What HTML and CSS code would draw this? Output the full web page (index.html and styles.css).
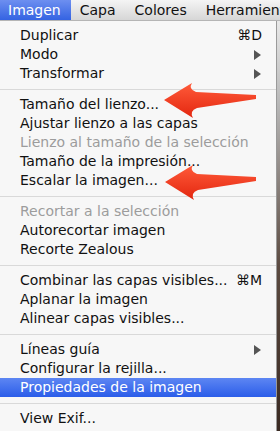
FILE: index.html
```html
<!DOCTYPE html>
<html lang="es">
<head>
    <meta charset="UTF-8">
    <meta name="viewport" content="width=device-width, initial-scale=1.0">
    <title>Menú Imagen</title>
    <link rel="stylesheet" href="styles.css">
</head>
<body>
    <div class="screen">
        <div class="menubar">
            <span class="bar-item active">Imagen</span>
            <span class="bar-item">Capa</span>
            <span class="bar-item">Colores</span>
            <span class="bar-item last">Herramienta</span>
        </div>

        <div class="content">
            <ul class="menu">
                <li class="item"><span>Duplicar</span><span class="key">&#8984;D</span></li>
                <li class="item"><span>Modo</span><span class="sub"></span></li>
                <li class="item"><span>Transformar</span><span class="sub"></span></li>
                <li class="sep"></li>
                <li class="item"><span>Tamaño del lienzo...</span></li>
                <li class="item"><span>Ajustar lienzo a las capas</span></li>
                <li class="item disabled"><span>Lienzo al tamaño de la selección</span></li>
                <li class="item"><span>Tamaño de la impresión...</span></li>
                <li class="item"><span>Escalar la imagen...</span></li>
                <li class="sep"></li>
                <li class="item disabled"><span>Recortar a la selección</span></li>
                <li class="item"><span>Autorecortar imagen</span></li>
                <li class="item"><span>Recorte Zealous</span></li>
                <li class="sep"></li>
                <li class="item"><span>Combinar las capas visibles...</span><span class="key">&#8984;M</span></li>
                <li class="item"><span>Aplanar la imagen</span></li>
                <li class="item"><span>Alinear capas visibles...</span></li>
                <li class="sep"></li>
                <li class="item"><span>Líneas guía</span><span class="sub"></span></li>
                <li class="item"><span>Configurar la rejilla...</span></li>
                <li class="item selected"><span>Propiedades de la imagen</span></li>
                <li class="sep"></li>
                <li class="item"><span>View Exif...</span></li>
            </ul>
            <div class="edge"></div>
        </div>

        <!-- flechas rojas encima del menú -->
        <svg class="arrows" width="280" height="431" viewBox="0 0 280 431">
            <defs>
                <linearGradient id="red" x1="0" y1="0" x2="0" y2="1">
                    <stop offset="0" stop-color="#ff5b3a"/>
                    <stop offset="1" stop-color="#e3260f"/>
                </linearGradient>
            </defs>
            <path d="M164,100 L192,83 Q188,89 196,92 L256,95 L256,99 L197,108 Q189,111 193,118 Z" fill="url(#red)"/>
            <path d="M165,182 L193,165 Q189,171 197,174 L256,177 L256,181 L198,190 Q190,193 194,200 Z" fill="url(#red)"/>
        </svg>
    </div>
</body>
</html>
```
FILE: styles.css
```css
body {
    margin: 0;
    font-family: 'DejaVu Sans', 'Liberation Sans', sans-serif;
    background: #fff;
}
.screen {
    position: relative;
    width: 280px;
    height: 431px;
    overflow: hidden;
}
.menubar {
    display: flex;
    height: 21px;
    background: linear-gradient(to bottom, #f4f4f4, #d6d6d6);
    border-bottom: 1px solid #b5b5b5;
    box-sizing: border-box;
    font-size: 14px;
    line-height: 21px;
    color: #111;
    white-space: nowrap;
}
.bar-item {
    padding: 0 10px 0 9px;
}
.bar-item.active {
    padding-left: 8px;
    background: linear-gradient(to bottom, #6d8ff0, #3463e2);
    color: #fff;
}
.bar-item.last {
    padding-right: 0;
}
.content {
    display: flex;
    height: 410px;
}
.menu {
    list-style: none;
    margin: 0;
    padding: 5px 0 0;
    width: 276px;
    background: #f7f7f7;
    font-size: 14px;
    color: #111;
}
.item {
    display: flex;
    justify-content: space-between;
    align-items: center;
    height: 19px;
    line-height: 19px;
    padding: 0 14px 0 20px;
    white-space: nowrap;
}
.item.disabled {
    color: #9c9c9c;
}
.item.selected {
    background: linear-gradient(to bottom, #5d86f3, #2b5de9);
    color: #fff;
}
.key {
    font-size: 14px;
}
.sub {
    width: 0;
    height: 0;
    margin-right: 1px;
    border-top: 5px solid transparent;
    border-bottom: 5px solid transparent;
    border-left: 7px solid #555;
}
.sep {
    height: 12px;
    display: flex;
    align-items: center;
}
.sep::after {
    content: '';
    flex: 1;
    height: 1px;
    background: #d9d9d9;
}
.edge {
    flex: 1;
    background: linear-gradient(to bottom, #e8e8e8, #b8b8b8 20%, #5b4a40 60%, #3a2a22);
    border-left: 1px solid #9a9a9a;
}
.arrows {
    position: absolute;
    left: 0;
    top: 0;
    pointer-events: none;
}
```
